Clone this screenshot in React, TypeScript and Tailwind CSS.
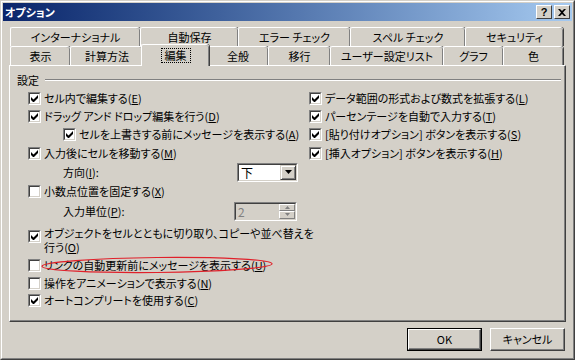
import React from "react";

const font = { fontFamily: '"MS UI Gothic", "Noto Sans CJK JP", sans-serif', fontFeatureSettings: '"palt"' };

function Check({ checked }: { checked: boolean }) {
    return (
        <span className="inline-block w-[13px] h-[13px] shrink-0 border border-t-[#808080] border-l-[#808080] border-r-white border-b-white">
            <span className="flex w-full h-full bg-white border border-t-[#404040] border-l-[#404040] border-r-[#d4d0c8] border-b-[#d4d0c8] items-center justify-center">
                {checked && (
                    <svg width="7" height="7" viewBox="0 0 7 7">
                        <path d="M0 2v3l2 2h1l4-4V0L2.5 4.5Z" fill="#000" />
                    </svg>
                )}
            </span>
        </span>
    );
}

function Row({ checked, h, indent = 0, children }: { checked: boolean; h: string; indent?: number; children: React.ReactNode }) {
    return (
        <div className={`flex items-center gap-[3px] ${h}`} style={indent ? { paddingLeft: indent } : undefined}>
            <Check checked={checked} />
            <span className="whitespace-nowrap">{children}</span>
        </div>
    );
}

function Tab({ w, label, selected = false }: { w: string; label: string; selected?: boolean }) {
    return (
        <div
            className={`${w} flex items-center justify-center border-l border-t border-white rounded-tl-[2px] rounded-tr-[3px] shadow-[inset_-1px_0_0_#808080,1px_0_0_#404040] bg-[#d4d0c8] ${
                selected ? "h-[22px] -mt-[3px] -mx-[2px] relative z-10 -mb-[1px]" : "h-[19px]"
            }`}
        >
            {selected ? (
                <span className="px-[3px] leading-[13px] outline outline-1 outline-dotted outline-black">{label}</span>
            ) : (
                label
            )}
        </div>
    );
}

function Btn({ children, def = false }: { children: React.ReactNode; def?: boolean }) {
    return (
        <div className={`w-[75px] h-[23px] ${def ? "border border-black" : ""}`}>
            <div className="w-full h-full flex items-center justify-center border border-t-white border-l-white border-r-[#404040] border-b-[#404040] shadow-[inset_-1px_-1px_0_#808080]">
                {children}
            </div>
        </div>
    );
}

export default function App() {
    return (
        <div
            className="w-[575px] h-[360px] bg-[#d4d0c8] text-[11px] text-black border border-t-[#d4d0c8] border-l-[#d4d0c8] border-r-[#404040] border-b-[#404040] overflow-hidden"
            style={font}
        >
            <div className="w-full h-full border border-t-white border-l-white border-r-[#808080] border-b-[#808080] p-[1px]">
                {/* タイトルバー */}
                <div className="h-[18px] flex items-center justify-between bg-gradient-to-r from-[#0a246a] to-[#a6caf0] pl-[2px] pr-[2px]">
                    <span className="text-white font-bold text-[11px]">オプション</span>
                    <div className="flex gap-[1px]">
                        <div className="w-[16px] h-[14px] flex items-center justify-center bg-[#d4d0c8] border border-t-white border-l-white border-r-[#404040] border-b-[#404040] text-[11px] font-bold leading-none" style={{ fontFamily: "Liberation Sans, sans-serif" }}>
                            ?
                        </div>
                        <div className="w-[16px] h-[14px] ml-[1px] flex items-center justify-center bg-[#d4d0c8] border border-t-white border-l-white border-r-[#404040] border-b-[#404040]">
                            <svg width="8" height="7" viewBox="0 0 8 7">
                                <path d="M0 0h2l2 2 2-2h2L5 3.5 8 7H6L4 5 2 7H0l3-3.5Z" fill="#000" />
                            </svg>
                        </div>
                    </div>
                </div>

                {/* タブ */}
                <div className="pl-[7px] pt-[6px]">
                    <div className="flex">
                        <Tab w="w-[130px]" label="インターナショナル" />
                        <Tab w="w-[98px]" label="自動保存" />
                        <Tab w="w-[112px]" label="エラー チェック" />
                        <Tab w="w-[115px]" label="スペル チェック" />
                        <Tab w="w-[98px]" label="セキュリティ" />
                    </div>
                    <div className="flex items-end">
                        <Tab w="w-[60px]" label="表示" />
                        <Tab w="w-[73px]" label="計算方法" />
                        <Tab w="w-[68px]" label="編集" selected />
                        <Tab w="w-[61px]" label="全般" />
                        <Tab w="w-[62px]" label="移行" />
                        <Tab w="w-[113px]" label="ユーザー設定リスト" />
                        <Tab w="w-[60px]" label="グラフ" />
                        <Tab w="w-[60px]" label="色" />
                    </div>
                </div>

                {/* パネル */}
                <div className="ml-[6px] w-[557px] h-[257px] border border-t-white border-l-white border-r-[#404040] border-b-[#404040] shadow-[inset_-1px_-1px_0_#808080] pl-[7px] pt-[7px]">
                    <div className="flex items-center gap-[6px] h-[14px]">
                        <span>設定</span>
                        <div className="flex-1 mr-[4px] h-[2px] border-t border-t-[#808080] border-b border-b-white" />
                    </div>
                    <div className="flex pl-[11px] pt-[2px]">
                        <div className="w-[281px] relative">
                            <Row checked h="h-[18px]"><span>セル内で編集する(<u>E</u>)</span></Row>
                            <Row checked h="h-[18px]"><span>ドラッグ アンド ドロップ編集を行う(<u>D</u>)</span></Row>
                            <Row checked h="h-[19px]" indent={35}><span>セルを上書きする前にメッセージを表示する(<u>A</u>)</span></Row>
                            <Row checked h="h-[18px]"><span>入力後にセルを移動する(<u>M</u>)</span></Row>
                            <div className="flex items-center justify-between h-[20px] pl-[35px] pr-[11px]">
                                <span>方向(<u>I</u>):</span>
                                <div className="w-[61px] h-[19px] border border-t-[#808080] border-l-[#808080] border-r-white border-b-white">
                                    <div className="w-full h-full flex bg-white border border-t-[#404040] border-l-[#404040] border-r-[#d4d0c8] border-b-[#d4d0c8]">
                                        <span className="flex-1 pl-[2px] leading-[15px] text-[12px]">下</span>
                                        <div className="w-[16px] h-full flex items-center justify-center bg-[#d4d0c8] border border-t-[#d4d0c8] border-l-[#d4d0c8] border-r-[#404040] border-b-[#404040] shadow-[inset_1px_1px_0_white,inset_-1px_-1px_0_#808080]">
                                            <svg width="7" height="4" viewBox="0 0 7 4"><path d="M0 0h7L3.5 4Z" fill="#000" /></svg>
                                        </div>
                                    </div>
                                </div>
                            </div>
                            <Row checked={false} h="h-[18px]"><span>小数点位置を固定する(<u>X</u>)</span></Row>
                            <div className="flex items-center justify-between h-[22px] pl-[35px] pr-[12px]">
                                <span>入力単位(<u>P</u>):</span>
                                <div className="w-[63px] h-[19px] border border-t-[#808080] border-l-[#808080] border-r-white border-b-white">
                                    <div className="w-full h-full flex bg-[#d4d0c8] border border-t-[#404040] border-l-[#404040] border-r-[#d4d0c8] border-b-[#d4d0c8]">
                                        <span className="flex-1 pl-[2px] leading-[15px] text-[12px] text-[#808080]">2</span>
                                        <div className="w-[16px] h-full flex flex-col">
                                            <div className="flex-1 flex items-center justify-center border border-t-white border-l-white border-r-[#808080] border-b-[#808080]">
                                                <svg width="5" height="3" viewBox="0 0 5 3"><path d="M2.5 0 5 3H0Z" fill="#808080" /></svg>
                                            </div>
                                            <div className="flex-1 flex items-center justify-center border border-t-white border-l-white border-r-[#808080] border-b-[#808080]">
                                                <svg width="5" height="3" viewBox="0 0 5 3"><path d="M0 0h5L2.5 3Z" fill="#808080" /></svg>
                                            </div>
                                        </div>
                                    </div>
                                </div>
                            </div>
                            <div className="flex items-start gap-[3px] h-[34px] pt-[4px]">
                                <span className="mt-[1px]"><Check checked /></span>
                                <div className="leading-[14px] whitespace-nowrap">
                                    <div>オブジェクトをセルとともに切り取り、コピーや並べ替えを</div>
                                    <div>行う(<u>O</u>)</div>
                                </div>
                            </div>
                            <Row checked={false} h="h-[18px]"><span>リンクの自動更新前にメッセージを表示する(<u>U</u>)</span></Row>
                            <Row checked={false} h="h-[18px]"><span>操作をアニメーションで表示する(<u>N</u>)</span></Row>
                            <Row checked h="h-[17px]"><span>オートコンプリートを使用する(<u>C</u>)</span></Row>
                            {/* 赤い楕円 */}
                            <svg className="absolute left-[12px] top-[166px] pointer-events-none overflow-visible" width="234" height="20" viewBox="0 0 234 20">
                                <ellipse cx="117" cy="10" rx="115" ry="7.5" fill="none" stroke="#e0202a" strokeWidth="1.2" transform="rotate(-0.6 117 10)" />
                            </svg>
                        </div>
                        <div>
                            <Row checked h="h-[18px]"><span>データ範囲の形式および数式を拡張する(<u>L</u>)</span></Row>
                            <Row checked h="h-[18px]"><span>パーセンテージを自動で入力する(<u>T</u>)</span></Row>
                            <Row checked h="h-[19px]"><span>[貼り付けオプション] ボタンを表示する(<u>S</u>)</span></Row>
                            <Row checked h="h-[18px]"><span>[挿入オプション] ボタンを表示する(<u>H</u>)</span></Row>
                        </div>
                    </div>
                </div>

                {/* ボタン */}
                <div className="flex justify-end gap-[8px] pr-[7px] pt-[6px]">
                    <Btn def>OK</Btn>
                    <Btn>キャンセル</Btn>
                </div>
            </div>
        </div>
    );
}
